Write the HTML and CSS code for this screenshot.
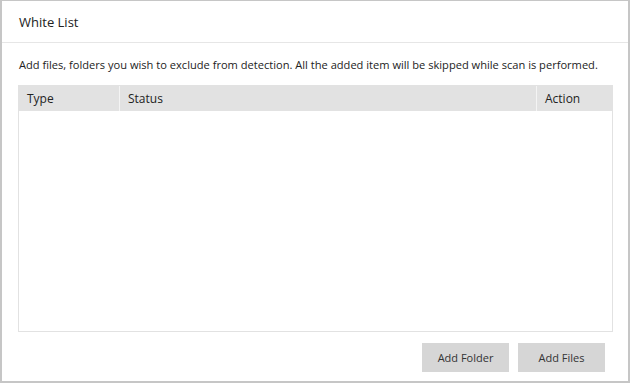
FILE: index.html
```html
<!DOCTYPE html>
<html lang="en">
<head>
    <meta charset="UTF-8">
    <title>White List</title>
    <link rel="stylesheet" href="styles.css">
</head>
<body>
    <div class="window">
        <div class="header">White List</div>
        <div class="content">
            <p class="desc">Add files, folders you wish to exclude from detection. All the added item will be skipped while scan is performed.</p>
            <div class="list">
                <div class="list-head">
                    <div class="col col-type">Type</div>
                    <div class="col col-status">Status</div>
                    <div class="col col-action">Action</div>
                </div>
                <div class="list-body"></div>
            </div>
            <div class="buttons">
                <button class="btn">Add Folder</button>
                <button class="btn">Add Files</button>
            </div>
        </div>
    </div>
</body>
</html>
```

FILE: styles.css
```css
body {
    margin: 0;
    font-family: "Open Sans", "Noto Sans", sans-serif;
    color: #222;
    background: #ffffff;
}
.window {
    width: 630px;
    height: 383px;
    box-sizing: border-box;
    border: 2px solid #c6c6c6;
    border-top-width: 1px;
    background: #ffffff;
    display: flex;
    flex-direction: column;
}
.header {
    height: 42px;
    box-sizing: border-box;
    padding: 0 0 0 17px;
    line-height: 42px;
    font-size: 13px;
    border-bottom: 1px solid #e6e6e6;
}
.content {
    flex: 1;
    display: flex;
    flex-direction: column;
    padding: 0 15px 9px 16px;
}
.desc {
    margin: 14px 0 0 1px;
    font-size: 11.1px;
    line-height: 16px;
    white-space: nowrap;
}
.list {
    margin-top: 12px;
    height: 247px;
    box-sizing: border-box;
    border: 1px solid #e2e2e2;
    display: flex;
    flex-direction: column;
}
.list-head {
    display: flex;
    height: 25px;
    background: #e2e2e2;
    font-size: 12px;
    line-height: 25px;
}
.col {
    padding-left: 8px;
    box-sizing: border-box;
}
.col-type {
    width: 101px;
    border-right: 1px solid #f4f4f4;
}
.col-status {
    flex: 1;
}
.col-action {
    width: 76px;
    border-left: 1px solid #f4f4f4;
}
.list-body {
    flex: 1;
}
.buttons {
    margin-top: auto;
    display: flex;
    justify-content: flex-end;
    gap: 9px;
    padding-right: 8px;
}
.btn {
    width: 87px;
    height: 29px;
    border: none;
    background: #d6d6d6;
    color: #333;
    font-family: "Open Sans", "Noto Sans", sans-serif;
    font-size: 11px;
    padding: 0;
}
```
